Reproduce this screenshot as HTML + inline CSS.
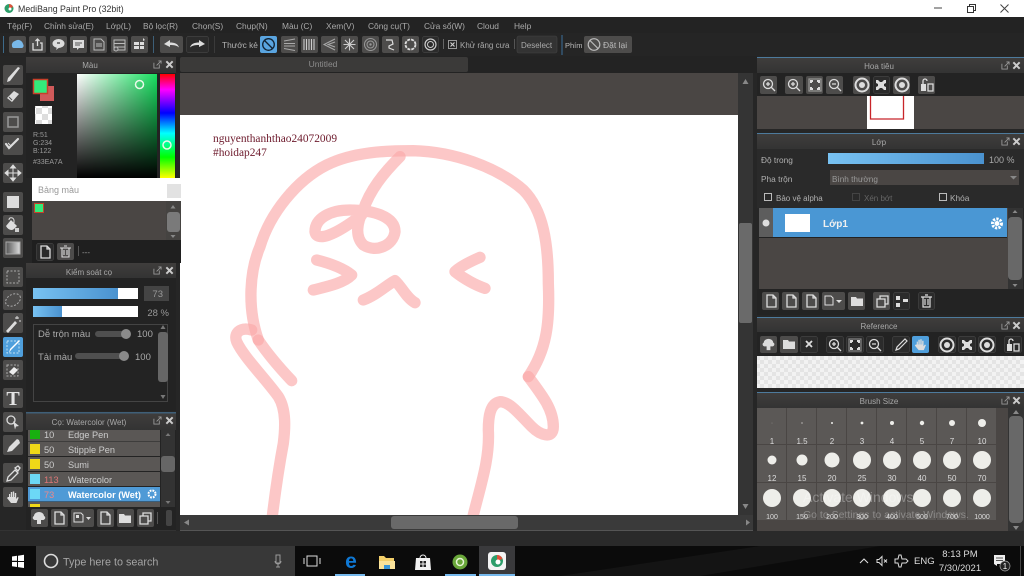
<!DOCTYPE html>
<html><head><meta charset="utf-8"><title>MediBang Paint Pro</title>
<style>
html,body{margin:0;padding:0;background:#262626;width:1024px;height:576px;overflow:hidden}
svg{display:block;position:absolute;left:0;top:0}
#root{filter:blur(.3px)}
text{font-family:"Liberation Sans","Noto Sans CJK SC",sans-serif;font-size:9px;fill:#aaa}
.m{font-size:8.4px;fill:#a9a9a9}
.h{font-size:8px;fill:#a8a8a8;text-anchor:middle}
.l{font-size:8.3px;fill:#b0b0b0}
.bn{fill:#4d4c4b}
.bd{fill:#2b2b2b;stroke:#444;stroke-width:.7}
.n{font-size:8px;fill:#ddd;text-anchor:middle}
.d{fill:#eeeeea}
.r{font-size:9.2px;fill:#ccc}
.s{fill:none;stroke:#ddd;stroke-width:1.3}
.f{fill:#ddd}
.p path{fill:none;stroke:rgba(251,168,168,.64);stroke-width:34;stroke-linecap:round;stroke-linejoin:round}
</style></head><body>
<svg id="root" width="1024" height="576" viewBox="0 0 1024 576" xmlns="http://www.w3.org/2000/svg">
<defs>
<linearGradient id="bl" x1="0" x2="1" y1="0" y2="0"><stop offset="0" stop-color="#78c2f2"/><stop offset="1" stop-color="#4a92cf"/></linearGradient>
<linearGradient id="sv" x1="0" x2="1" y1="0" y2="0"><stop offset="0" stop-color="#fff"/><stop offset="1" stop-color="#18e060"/></linearGradient>
<linearGradient id="sk" x1="0" x2="0" y1="0" y2="1"><stop offset="0" stop-color="#000" stop-opacity="0"/><stop offset="1" stop-color="#000"/></linearGradient>
<linearGradient id="hue" x1="0" x2="0" y1="0" y2="1"><stop offset="0" stop-color="#f00"/><stop offset=".15" stop-color="#f0f"/><stop offset=".375" stop-color="#00f"/><stop offset=".57" stop-color="#0ff"/><stop offset=".8" stop-color="#0f0"/><stop offset="1" stop-color="#ff0"/></linearGradient>
<linearGradient id="hd" x1="0" x2="0" y1="0" y2="1"><stop offset="0" stop-color="#3f3d3c"/><stop offset="1" stop-color="#333"/></linearGradient>
<linearGradient id="gr" x1="0" x2="1" y1="0" y2="0"><stop offset="0" stop-color="#555"/><stop offset="1" stop-color="#ddd"/></linearGradient>
<pattern id="ck" width="8" height="8" patternUnits="userSpaceOnUse"><rect width="8" height="8" fill="#f2f2f2"/><rect width="4" height="4" fill="#e4e4e4"/><rect x="4" y="4" width="4" height="4" fill="#e4e4e4"/></pattern>
<pattern id="ck2" width="12" height="12" patternUnits="userSpaceOnUse"><rect width="12" height="12" fill="#fff"/><rect width="6" height="6" fill="#ddd"/><rect x="6" y="6" width="6" height="6" fill="#ddd"/></pattern>
<symbol id="pg" viewBox="0 0 18 18"><path class="s" d="M5 3h6l3 3v9H5zM11 3v3h3"/></symbol>
<symbol id="fd" viewBox="0 0 18 18"><path class="f" d="M3 5h5l1 1.5h6V14H3z"/></symbol>
<symbol id="cp" viewBox="0 0 18 18"><path class="s" d="M4 7h8v8H4zM7 7V4h8v8h-3"/></symbol>
<symbol id="zi" viewBox="0 0 18 18"><circle class="s" cx="8" cy="8" r="4.5"/><path class="s" d="M11.5 11.5l3.5 3.5M6 8h4M8 6v4"/></symbol>
<symbol id="zo" viewBox="0 0 18 18"><circle class="s" cx="8" cy="8" r="4.5"/><path class="s" d="M11.5 11.5l3.5 3.5M6 8h4"/></symbol>
<symbol id="ft" viewBox="0 0 18 18"><path class="s" d="M3 3h12v12H3z" stroke-opacity=".5"/><path class="f" d="M4 4h3v2H6v1H4zM14 4v3h-2V6h-1V4zM4 14v-3h2v1h1v2zM14 14h-3v-2h1v-1h2z"/></symbol>
<symbol id="rt" viewBox="0 0 18 18"><circle cx="9" cy="9" r="6.5" fill="none" stroke="#ddd" stroke-width="2"/><circle class="f" cx="9" cy="9" r="3"/></symbol>
<symbol id="fl" viewBox="0 0 18 18"><path class="f" d="M4 4h2l2 2h2l2-2h2v3l-2 1v2l2 1v3h-2l-2-2H8l-2 2H4v-3l2-1V8L4 7z"/></symbol>
<symbol id="lk" viewBox="0 0 18 18"><path class="f" d="M3 8h5v7H3z"/><path class="s" d="M10 8h5v7h-5zM5 8V5a2 2 0 0 1 4 0"/></symbol>
<symbol id="hd2" viewBox="0 0 18 18"><path class="f" d="M5 9V6h1.2v3h.6V4h1.4v5h.6V3.5h1.4V9h.6V5h1.400v6l1.500-2 1 .6L12.500 15H7L3 10l1-1z"/></symbol>
<symbol id="up" viewBox="0 0 18 18"><path class="f" d="M9 3c3 0 5 2 5 4 1.500.4 2 3-.5 4H11v4H7v-4H4.500C2 10 2.500 7.500 4 7c0-2 2-4 5-4z"/></symbol>
<symbol id="px" viewBox="0 0 10 10"><path d="M1 3v6h6V5M4 6l5-5M6 1h3v3" fill="none" stroke="#999" stroke-width="1"/></symbol>
<symbol id="cl" viewBox="0 0 10 10"><path d="M1.500 1.500l7 7M8.500 1.500l-7 7" stroke="#ccc" stroke-width="2.200"/></symbol>
</defs>

<!-- base -->
<rect width="1024" height="576" fill="#262626"/>
<!-- title bar -->
<rect width="1024" height="17" fill="#fff"/>
<circle cx="9" cy="8.500" r="4.500" fill="#2d9d6a"/><path d="M9 4a4.500 4.500 0 0 1 4 3l-4 2z" fill="#e0513a"/><circle cx="10" cy="9" r="1.500" fill="#fff"/>
<text x="18" y="12" style="font-size:8.800px;fill:#333">MediBang Paint Pro (32bit)</text>
<path d="M934 8h8" stroke="#444" stroke-width="1"/><path d="M967.500 6.500h6v6h-6zM969.500 6.500V4.500h6v6h-2" fill="none" stroke="#333" stroke-width="1"/><path d="M1000.500 4.500l8 8M1008.500 4.500l-8 8" stroke="#444" stroke-width="1"/>

<!-- menu -->
<rect y="17" width="1024" height="16" fill="#232323"/>
<text class="m" x="7" y="29">Tệp(F)</text><text class="m" x="44" y="29">Chỉnh sửa(E)</text><text class="m" x="106" y="29">Lớp(L)</text><text class="m" x="143" y="29">Bộ lọc(R)</text><text class="m" x="192" y="29">Chọn(S)</text><text class="m" x="236" y="29">Chụp(N)</text><text class="m" x="282" y="29">Màu (C)</text><text class="m" x="326" y="29">Xem(V)</text><text class="m" x="368" y="29">Công cụ(T)</text><text class="m" x="424" y="29">Cửa sổ(W)</text><text class="m" x="477" y="29">Cloud</text><text class="m" x="514" y="29">Help</text>

<!-- toolbar -->
<rect y="33" width="1024" height="23" fill="#252525"/>
<rect x="3" y="36" width="1" height="17" fill="#3d6a8a"/>
<g class="bn">
<rect x="9" y="36" width="17" height="17" rx="2"/><rect x="29" y="36" width="17" height="17" rx="2"/><rect x="50" y="36" width="17" height="17" rx="2"/><rect x="70" y="36" width="17" height="17" rx="2"/><rect x="90" y="36" width="17" height="17" rx="2"/><rect x="111" y="36" width="17" height="17" rx="2"/><rect x="131" y="36" width="17" height="17" rx="2"/>
<rect x="160" y="36" width="23" height="17" rx="2"/>
<rect x="281" y="36" width="17" height="17" rx="2"/><rect x="301" y="36" width="17" height="17" rx="2"/><rect x="321" y="36" width="17" height="17" rx="2"/><rect x="341" y="36" width="17" height="17" rx="2"/><rect x="362" y="36" width="17" height="17" rx="2"/><rect x="382" y="36" width="17" height="17" rx="2"/><rect x="402" y="36" width="17" height="17" rx="2"/>
<rect x="584" y="36" width="48" height="17" rx="2"/>
</g>
<rect class="bd" x="186.500" y="36.500" width="22" height="16" rx="2"/>
<rect class="bd" x="422.500" y="36.500" width="16" height="16" rx="2"/>
<rect x="517" y="36" width="40" height="17" rx="2" fill="#333" stroke="#444" stroke-width=".6"/>
<path d="M12 46a4 4 0 0 1 3-5 5 5 0 0 1 8 3 2.500 2.500 0 0 1-1 4H14a2 2 0 0 1-2-2z" fill="#79b8e8"/>
<path class="s" d="M33 43v7h9v-7h-2M37.500 46V39M35.500 41l2-2 2 2"/>
<ellipse class="f" cx="58.500" cy="43.500" rx="6" ry="4.500"/><path d="M57 47l-1 3 4-3z" fill="#ddd"/><path d="M57 43h3" stroke="#555" stroke-width="1.500"/>
<path class="f" d="M73 40h11v8h-5l-2 2v-2h-4z"/><path d="M75 43h7M75 45h5" stroke="#555"/>
<path d="M94 39h7l3 3v8H94z" fill="none" stroke="#bbb"/><path d="M96 44h6M96 46h6" stroke="#bbb"/>
<path d="M114 40h11v10h-11zM114 43.500h11M114 47h11" fill="none" stroke="#bbb"/><circle cx="116" cy="49" r="2" fill="#555" stroke="#bbb"/>
<path class="f" d="M134 42h5v3h-5zM140 42h4v3h-4zM134 46h5v3h-5zM140 46h4v3h-4z"/><path d="M143 38l2 2-2 1z" fill="#ddd"/>
<rect x="153" y="36" width="1" height="17" fill="#3d5f78"/>
<path class="f" d="M164 44l6-4v2.500c4 0 8 1 9 5-2-2-5-2.500-9-2.500V47z"/>
<path class="f" d="M205 44l-6-4v2.500c-4 0-8 1-9 5 2-2 5-2.500 9-2.500V47z"/>
<rect x="214" y="36" width="1" height="17" fill="#3a3a3a"/>
<text x="222" y="48" style="font-size:8.300px;fill:#b4b4b4">Thước kẻ</text>
<rect x="260" y="36" width="17" height="17" rx="2" fill="#5aa5e0"/><circle cx="268.500" cy="44.500" r="5.800" fill="none" stroke="#123" stroke-width="1.300"/><path d="M264.500 40.500l8 8" stroke="#123" stroke-width="1.300"/>
<path d="M284 41l11-2M284 43.500h11M284 46h11M284 48.500l11 2" stroke="#aaa" stroke-width="1.100"/>
<path d="M304 39v11M306.500 39v11M309 39v11M311.500 39v11M314 39v11" stroke="#ccc" stroke-width="1.100"/>
<path d="M335 39l-11 5.500 11 5.500M335 42l-7 2.500 7 2.500" fill="none" stroke="#aaa"/>
<path d="M349.500 38.500v12M343.500 44.500h12M345 40l9 9M354 40l-9 9" stroke="#ccc" stroke-width="1.100"/>
<circle cx="370.500" cy="44.500" r="6" fill="none" stroke="#999"/><circle cx="370.500" cy="44.500" r="3.500" fill="none" stroke="#999"/><circle cx="370.500" cy="44.500" r="1.200" fill="#999"/>
<path d="M386 40h6l1 4-4 2v2l5 2" fill="none" stroke="#ddd" stroke-width="1.200"/>
<circle cx="410.500" cy="44.500" r="5" fill="none" stroke="#ddd" stroke-width="1.800" stroke-dasharray="3 1"/>
<circle cx="430.500" cy="44.500" r="5.500" fill="none" stroke="#ccc" stroke-width="1.200"/><circle cx="430.500" cy="44.500" r="3" fill="none" stroke="#ccc"/>
<rect x="443" y="39" width="1" height="10" fill="#666"/>
<rect x="448.500" y="40.500" width="8" height="8" fill="none" stroke="#999"/><path d="M450.500 42.500l4 4M454.500 42.500l-4 4" stroke="#ccc" stroke-width="1.200"/>
<text x="460" y="48" style="font-size:8px;fill:#aaa">Khử răng cưa</text>
<rect x="514" y="39" width="1" height="10" fill="#555"/>
<text x="521" y="48" style="font-size:8px;fill:#aaa">Deselect</text>
<rect x="561.500" y="35" width="1" height="20" fill="#3a6f9a"/>
<text x="565" y="48" style="font-size:7.500px;fill:#bbb">Phím</text>
<circle cx="594" cy="44.500" r="5.800" fill="none" stroke="#bbb" stroke-width="1.200"/><path d="M590 40.500l8 8" stroke="#bbb" stroke-width="1.200"/>
<text x="603" y="48" style="font-size:8.500px;fill:#bbb">Đặt lại</text>

<!-- tab row -->
<rect x="176" y="56" width="581" height="17" fill="#232323"/>
<rect x="180" y="57" width="288" height="15" rx="2" fill="#3b3a39"/>
<text x="323" y="67" text-anchor="middle" style="font-size:8.500px;fill:#8c8c8c">Untitled</text>

<!-- canvas -->
<rect x="180" y="73" width="558" height="42" fill="#4a4644"/>
<rect x="180" y="115" width="558" height="400" fill="#fff"/>
<svg x="180" y="110" width="400" height="405" viewBox="0 0 1200 1215">
<g class="p">
<path d="M235 690C200 590 210 480 240 410 270 310 350 210 440 165 520 125 620 122 700 122 820 125 950 170 1030 240 1090 300 1105 400 1105 520 1110 640 1100 720 1045 800"/>
<path d="M660 140C610 190 570 240 550 300 530 340 525 380 550 405 590 430 640 405 645 365 645 320 580 300 510 300 450 300 405 325 405 365 410 395 460 380 545 315"/>
<path d="M410 450C450 460 490 475 515 495 490 520 440 530 400 540"/>
<path d="M900 442C870 455 840 470 825 485 850 505 885 525 915 535"/>
<path d="M550 570C590 555 620 525 645 512 665 530 680 565 705 578"/>
<path d="M235 690C265 735 300 775 335 812"/>
<path d="M215 660C180 650 160 670 170 695 190 740 260 810 295 860 320 900 315 960 310 1000 295 1080 285 1150 275 1235"/>
<path d="M1045 800C1090 860 1120 900 1120 950 1120 990 1080 975 1055 950 1020 915 990 875 960 875 930 880 925 920 925 960 930 1050 900 1130 875 1235"/>
</g>
</svg>
<text x="213" y="142" style="font-family:'Liberation Serif',serif;font-size:11.400px;fill:#6d1a2c">nguyenthanhthao24072009</text>
<text x="213" y="156" style="font-family:'Liberation Serif',serif;font-size:11.400px;fill:#6d1a2c">#hoidap247</text>

<!-- center scrollbars -->
<rect x="738" y="73" width="15" height="442" fill="#343434"/>
<rect x="739" y="223" width="13" height="100" rx="2" fill="#6a6a6a"/>
<path d="M745.500 79l-3 5h6zM745.500 509l-3-5h6z" fill="#888"/>
<rect x="180" y="515" width="573" height="15" fill="#3a3a3a"/>
<rect x="180" y="530" width="573" height="1" fill="#555"/>
<rect x="391" y="516" width="127" height="13" rx="3" fill="#696969"/>
<path d="M184 522.500l5-3v6zM750 522.500l-4-3v6z" fill="#888"/>

<!-- left tool strip -->
<rect x="0" y="56" width="26" height="474" fill="#262626"/>
<g class="bn">
<rect x="3" y="65" width="20" height="20" rx="2"/><rect x="3" y="88" width="20" height="20" rx="2"/><rect x="3" y="112" width="20" height="20" rx="2"/><rect x="3" y="135" width="20" height="20" rx="2"/><rect x="3" y="163" width="20" height="20" rx="2"/><rect x="3" y="192" width="20" height="20" rx="2"/><rect x="3" y="215" width="20" height="20" rx="2"/><rect x="3" y="238" width="20" height="20" rx="2"/><rect x="3" y="267" width="20" height="20" rx="2"/><rect x="3" y="290" width="20" height="20" rx="2"/><rect x="3" y="313" width="20" height="20" rx="2"/><rect x="3" y="360" width="20" height="20" rx="2"/><rect x="3" y="388" width="20" height="20" rx="2"/><rect x="3" y="412" width="20" height="20" rx="2"/><rect x="3" y="435" width="20" height="20" rx="2"/><rect x="3" y="463" width="20" height="20" rx="2"/><rect x="3" y="487" width="20" height="20" rx="2"/>
</g>
<rect x="3" y="337" width="20" height="20" rx="2" fill="#4f9fdc"/>
<path d="M7 82l3-1 10-13-2-1-10 11z" fill="#ddd"/>
<path d="M7 98l7-7 5 3-7 8z" fill="#ddd"/><path d="M9 97l3 3" stroke="#555"/>
<rect x="8" y="117" width="10" height="10" fill="none" stroke="#999" stroke-width="1.500"/>
<path d="M6 144l3 4 9-9" fill="none" stroke="#ddd" stroke-width="2.200" stroke-linecap="round"/><path d="M8 143l3 3" stroke="#ddd"/>
<path d="M13 165l2.500 3h-5zM13 181l2.500-3h-5zM5 173l3 2.500v-5zM21 173l-3 2.500v-5zM13 168v10M8 173h10" fill="#ddd" stroke="#ddd"/>
<rect x="7" y="196" width="12" height="12" fill="#ddd"/>
<path d="M6 226l5-6 6 6-3 3c-2 2-6 1-8-3z" fill="#ddd"/><path d="M9 220c0-3 4-3 5 0v3" fill="none" stroke="#ddd"/><path d="M15 228h4v4h-4z" fill="#ddd" opacity=".9"/>
<rect x="6" y="242" width="14" height="12" fill="url(#gr)" stroke="#aaa"/>
<rect x="7" y="271" width="12" height="12" fill="none" stroke="#aaa" stroke-dasharray="2 1.500"/>
<ellipse cx="13" cy="300" rx="8" ry="5.500" fill="none" stroke="#aaa" stroke-dasharray="2 1.500" transform="rotate(-30 13 300)"/>
<path d="M6 331l9-10 2 2-9 10z" fill="#ddd"/><path d="M17 316v3M15 318h4M20 320v2" stroke="#ddd"/>
<rect x="7" y="341" width="12" height="12" fill="none" stroke="#bfe0f5" stroke-dasharray="2 1.500"/><path d="M9 353l2-3 9-9-1-1-9 9z" fill="#fff"/>
<rect x="7" y="365" width="11" height="11" fill="none" stroke="#aaa" stroke-dasharray="2 1.500"/><path d="M9 372l5-5 4 3-5 5z" fill="#eee"/>
<text x="13" y="405" text-anchor="middle" style="font-family:'Liberation Serif',serif;font-size:20px;font-weight:bold;fill:#e4e4e4">T</text>
<circle cx="11" cy="420" r="4" fill="none" stroke="#ddd" stroke-width="1.300"/><path d="M13 421l6 5-3 .5-1 3z" fill="#ddd"/>
<path d="M7 452l2-5 8-8 2 1 1 3-8 8z" fill="#ddd"/>
<path d="M7 481l1-4 7-7 3 3-7 7zM15 468l3-2 2 2-2 3z" fill="none" stroke="#ddd" stroke-width="1.300"/>
<use href="#hd2" x="4" y="488" width="18" height="18"/>

<!-- colour panel -->
<rect x="26" y="57" width="150" height="16" fill="url(#hd)"/>
<rect x="26" y="73" width="150" height="105" fill="#232323"/>
<text class="h" x="90" y="68">Màu</text>
<use href="#px" x="153" y="60" width="9" height="9"/><use href="#cl" x="165" y="60" width="9" height="9"/>
<rect x="40" y="86" width="14" height="15" fill="#d05a5a"/>
<rect x="33.500" y="79.500" width="14" height="14" fill="#33ea7a" stroke="#c8402a" stroke-width="1.500"/>
<rect x="35" y="106" width="17" height="18" fill="url(#ck2)"/>
<text x="33" y="137" style="font-size:7px;fill:#999">R:51</text><text x="33" y="145" style="font-size:7px;fill:#999">G:234</text><text x="33" y="153" style="font-size:7px;fill:#999">B:122</text><text x="33" y="164" style="font-size:7px;fill:#999">#33EA7A</text>
<rect x="77" y="74" width="80" height="104" fill="url(#sv)"/><rect x="77" y="74" width="80" height="104" fill="url(#sk)"/>
<circle cx="139.500" cy="84.500" r="4" fill="none" stroke="#e8f8e8" stroke-width="1.500"/>
<rect x="160" y="74" width="15" height="104" fill="url(#hue)"/>
<circle cx="167" cy="145" r="4" fill="none" stroke="#e8f8e8" stroke-width="1.500"/>

<!-- palette -->
<rect x="32" y="178" width="149" height="23" fill="#fff"/>
<text x="38" y="193" style="font-size:9px;fill:#999">Bảng màu</text>
<rect x="167" y="184" width="14" height="14" fill="#e2e2e2"/>
<rect x="32" y="201" width="149" height="39" fill="#4a4644"/>
<rect x="34.500" y="203.500" width="9" height="9" fill="#33ea7a" stroke="#c8402a"/>
<rect x="166" y="201" width="15" height="39" fill="#454341"/>
<rect x="167" y="212" width="13" height="20" rx="3" fill="#7a7a7a"/>
<path d="M173 205l-2.500 3.500h5zM173 238l-2.500-3h5z" fill="#888"/>
<rect x="32" y="240" width="149" height="23" fill="#1f1f1f"/>
<rect class="bd" x="36.500" y="243.500" width="17" height="17" rx="2"/><use href="#pg" x="36" y="243" width="18" height="18"/>
<rect class="bn" x="57" y="243" width="17" height="17" rx="2"/>
<path d="M60 248h11M62 248v9h7v-9M64 246h3M64 250v5M67 250v5" fill="none" stroke="#ddd" stroke-width="1.100"/>
<rect x="78" y="246" width="1" height="10" fill="#555"/>
<text x="82" y="255" style="font-size:8px;fill:#999">---</text>

<!-- brush control -->
<rect x="26" y="263" width="150" height="15" fill="url(#hd)"/>
<rect x="26" y="278" width="150" height="133" fill="#232323"/>
<text class="h" x="89" y="275">Kiểm soát cọ</text>
<use href="#px" x="153" y="266" width="9" height="9"/><use href="#cl" x="165" y="266" width="9" height="9"/>
<rect x="33" y="288" width="105" height="11" fill="#fff"/><rect x="33" y="288" width="85" height="11" fill="url(#bl)"/>
<rect x="144" y="286" width="25" height="15" fill="#444"/><text x="163" y="297" text-anchor="end" style="font-size:9.500px;fill:#999">73</text>
<rect x="33" y="306" width="105" height="11" fill="#fff"/><rect x="33" y="306" width="29" height="11" fill="url(#bl)"/>
<text x="169" y="316" text-anchor="end" style="font-size:9.500px;fill:#999">28 %</text>
<rect x="33.500" y="324.500" width="134" height="77" fill="none" stroke="#444"/>
<text x="38" y="337" style="font-size:9.500px;fill:#aaa">Dễ trộn màu</text>
<rect x="95" y="331" width="35" height="6" rx="3" fill="#4f4f4f"/><circle cx="126" cy="334" r="5" fill="#8a8a8a"/>
<text x="137" y="337" style="font-size:9.500px;fill:#aaa">100</text>
<text x="38" y="360" style="font-size:9.500px;fill:#aaa">Tải màu</text>
<rect x="75" y="353" width="50" height="6" rx="3" fill="#4f4f4f"/><circle cx="124" cy="356" r="5" fill="#8a8a8a"/>
<text x="135" y="360" style="font-size:9.500px;fill:#aaa">100</text>
<rect x="158" y="332" width="10" height="50" rx="3" fill="#666"/>
<path d="M163 325l-2.500 4h5zM163 399l-2.500-4h5z" fill="#777"/>

<!-- brush list -->
<rect x="26" y="412" width="150" height="1.500" fill="#3f5f78"/>
<rect x="26" y="413.500" width="150" height="16.500" fill="url(#hd)"/>
<rect x="26" y="430" width="150" height="100" fill="#232323"/>
<text class="h" x="89" y="425">Cọ: Watercolor (Wet)</text>
<use href="#px" x="153" y="416" width="9" height="9"/><use href="#cl" x="165" y="416" width="9" height="9"/>
<g fill="#5a5755">
<rect x="28" y="430" width="132" height="11.500"/><rect x="28" y="442" width="132" height="14"/><rect x="28" y="457" width="132" height="14"/><rect x="28" y="472" width="132" height="14"/><rect x="28" y="502" width="132" height="5"/>
</g>
<rect x="28" y="487" width="132" height="14.500" fill="#4f9ad6"/>
<rect x="30" y="430" width="10" height="9" fill="#18b010"/><rect x="30" y="444" width="10" height="10" fill="#f0d818"/><rect x="30" y="459" width="10" height="10" fill="#f0d818"/><rect x="30" y="474" width="10" height="10" fill="#6cd8f6"/><rect x="30" y="489" width="10" height="10" fill="#6cd8f6"/><rect x="30" y="504" width="10" height="3" fill="#f0d818"/>
<text x="44" y="438" class="r">10</text><text x="68" y="438" class="r">Edge Pen</text>
<text x="44" y="453" class="r">50</text><text x="68" y="453" class="r">Stipple Pen</text>
<text x="44" y="468" class="r">50</text><text x="68" y="468" class="r">Sumi</text>
<text x="44" y="483" class="r" style="fill:#d77">113</text><text x="68" y="483" class="r">Watercolor</text>
<text x="44" y="498" class="r" style="fill:#e88">73</text><text x="68" y="498" class="r" style="fill:#fff;font-weight:bold">Watercolor (Wet)</text>
<circle cx="152" cy="494" r="3.500" fill="none" stroke="#fff" stroke-width="2" stroke-dasharray="1.800 1"/>
<rect x="161" y="430" width="14" height="77" fill="#333"/>
<rect x="161" y="456" width="14" height="16" rx="3" fill="#666"/>
<path d="M168 433l-2.500 3h5zM168 504l-2.500-3h5z" fill="#777"/>
<g class="bn"><rect x="31" y="509" width="17" height="18" rx="2"/><rect x="51" y="509" width="17" height="18" rx="2"/><rect x="71" y="509" width="23" height="18" rx="2"/><rect x="97" y="509" width="17" height="18" rx="2"/><rect x="117" y="509" width="17" height="18" rx="2"/><rect x="137" y="509" width="17" height="18" rx="2"/></g>
<use href="#up" x="30" y="509" width="18" height="18"/><use href="#pg" x="50" y="509" width="18" height="18"/>
<path d="M74 513h7l2 2v7h-9z" fill="none" stroke="#ddd"/><rect x="76" y="515" width="3" height="3" fill="#ddd"/><path d="M86 517h5l-2.500 3z" fill="#ddd"/>
<use href="#pg" x="96" y="509" width="18" height="18"/><use href="#fd" x="116" y="509" width="18" height="18"/><use href="#cp" x="136" y="509" width="18" height="18"/>
<rect x="157" y="512" width="1" height="12" fill="#555"/>
<rect x="166" y="510" width="6" height="16" rx="2" fill="#444"/>

<!-- right: navigator -->
<rect x="757" y="57" width="267" height="1" fill="#4d7a9c"/>
<rect x="757" y="58" width="267" height="15" fill="url(#hd)"/>
<rect x="757" y="73" width="267" height="23" fill="#232323"/>
<text class="h" x="879" y="69">Hoa tiêu</text>
<use href="#px" x="1001" y="61" width="9" height="9"/><use href="#cl" x="1012" y="61" width="9" height="9"/>
<g class="bn"><rect x="760" y="76" width="17" height="18" rx="2"/><rect x="785" y="76" width="18" height="18" rx="2"/><rect x="806" y="76" width="17" height="18" rx="2"/><rect x="826" y="76" width="17" height="18" rx="2"/><rect x="853" y="76" width="17" height="18" rx="2"/><rect x="893" y="76" width="17" height="18" rx="2"/><rect x="918" y="76" width="17" height="18" rx="2"/></g>
<rect class="bd" x="873.500" y="76.500" width="16" height="17" rx="2"/>
<use href="#zi" x="760" y="76" width="18" height="18"/><use href="#zi" x="785" y="76" width="18" height="18"/><use href="#ft" x="806" y="76" width="18" height="18"/><use href="#zo" x="826" y="76" width="18" height="18"/><use href="#rt" x="853" y="76" width="18" height="18"/><use href="#fl" x="872" y="76" width="18" height="18"/><use href="#rt" x="893" y="76" width="18" height="18"/><use href="#lk" x="918" y="76" width="18" height="18"/>
<rect x="757" y="96" width="267" height="33" fill="#4a4644"/>
<rect x="867" y="96" width="47" height="33" fill="#fff"/>
<path d="M870.500 96v23h33V96" fill="none" stroke="#c8252a" stroke-width="1.300"/>
<rect x="757" y="129" width="267" height="4" fill="#262626"/>

<!-- layer -->
<rect x="757" y="133" width="267" height="1" fill="#4d7a9c"/>
<rect x="757" y="134" width="267" height="15" fill="url(#hd)"/>
<rect x="757" y="149" width="267" height="59" fill="#2a2a2a"/>
<text class="h" x="879" y="145">Lớp</text>
<use href="#px" x="1001" y="137" width="9" height="9"/><use href="#cl" x="1012" y="137" width="9" height="9"/>
<text class="l" x="761" y="163">Độ trong</text>
<rect x="828" y="153" width="156" height="11" fill="url(#bl)"/>
<text x="989" y="163" style="font-size:9px;fill:#aaa">100 %</text>
<text class="l" x="761" y="182">Pha trộn</text>
<rect x="830" y="170" width="189" height="15" fill="#4a4644"/>
<text x="832" y="182" style="font-size:8.200px;fill:#999">Bình thường</text>
<path d="M1010 176h7l-3.500 3.500z" fill="#888"/>
<rect x="764.500" y="193.500" width="7" height="7" fill="none" stroke="#bbb"/>
<text x="776" y="201" style="font-size:8px;fill:#b0b0b0">Bảo vệ alpha</text>
<rect x="852.500" y="193.500" width="7" height="7" fill="none" stroke="#444"/>
<text x="864" y="201" style="font-size:8px;fill:#666">Xén bớt</text>
<rect x="939.500" y="193.500" width="7" height="7" fill="none" stroke="#bbb"/>
<text class="l" x="950" y="201">Khóa</text>
<rect x="759" y="208" width="249" height="81" fill="#4a4644"/>
<rect x="759" y="208" width="14" height="29" fill="#5d5d5d"/>
<circle cx="766" cy="223" r="3.500" fill="#ddd"/>
<rect x="773" y="208" width="234" height="29" fill="#4a97d4"/>
<rect x="759" y="237" width="248" height="1" fill="#222"/>
<rect x="785" y="214" width="25" height="18" fill="#fff"/>
<text x="823" y="227" style="font-size:10px;font-weight:bold;fill:#f0f0f0">Lớp1</text>
<circle cx="997" cy="223.500" r="4.500" fill="none" stroke="#fff" stroke-width="3" stroke-dasharray="2.200 1.200"/><circle cx="997" cy="223.500" r="2.500" fill="#fff"/>
<rect x="1008" y="208" width="15" height="81" fill="#333"/>
<rect x="1008" y="217" width="14" height="63" rx="4" fill="#686868"/>
<path d="M1015 210l-2.500 3h5zM1015 287l-2.500-3h5z" fill="#888"/>
<rect x="757" y="289" width="267" height="26" fill="#232323"/>
<g class="bn"><rect x="762" y="292" width="17" height="18" rx="2"/><rect x="782" y="292" width="17" height="18" rx="2"/><rect x="802" y="292" width="17" height="18" rx="2"/><rect x="822" y="292" width="23" height="18" rx="2"/><rect x="848" y="292" width="17" height="18" rx="2"/><rect x="873" y="292" width="17" height="18" rx="2"/></g>
<rect class="bd" x="893.500" y="292.500" width="16" height="17" rx="2"/><rect class="bd" x="918.500" y="292.500" width="16" height="17" rx="2"/>
<use href="#pg" x="762" y="292" width="18" height="18"/><use href="#pg" x="782" y="292" width="18" height="18"/><use href="#pg" x="802" y="292" width="18" height="18"/>
<path d="M825 296h6l2 2v7h-8z" fill="none" stroke="#ddd"/><path d="M836 300h6l-3 3z" fill="#ddd"/>
<use href="#fd" x="848" y="292" width="18" height="18"/><use href="#cp" x="873" y="292" width="18" height="18"/>
<path class="f" d="M896 296h4v4h-4zM896 303h4v4h-4zM903 299h5v3h-5z"/>
<path d="M921 297h11M923 297v10h7v-10M925 295h3M925 299v6M928 299v6" fill="none" stroke="#ddd" stroke-width="1.200"/>

<!-- reference -->
<rect x="757" y="317" width="267" height="1" fill="#4d7a9c"/>
<rect x="757" y="318" width="267" height="14" fill="url(#hd)"/>
<rect x="757" y="332" width="267" height="24" fill="#232323"/>
<text class="h" x="879" y="329">Reference</text>
<use href="#px" x="1001" y="321" width="9" height="9"/><use href="#cl" x="1012" y="321" width="9" height="9"/>
<g class="bn"><rect x="760" y="336" width="17" height="17" rx="2"/><rect x="780" y="336" width="18" height="17" rx="2"/></g>
<g class="bd"><rect x="800.500" y="336.500" width="17" height="16" rx="2"/><rect x="826.500" y="336.500" width="17" height="16" rx="2"/><rect x="846.500" y="336.500" width="17" height="16" rx="2"/><rect x="866.500" y="336.500" width="17" height="16" rx="2"/><rect x="892.500" y="336.500" width="17" height="16" rx="2"/><rect x="938.500" y="336.500" width="17" height="16" rx="2"/><rect x="958.500" y="336.500" width="17" height="16" rx="2"/><rect x="978.500" y="336.500" width="17" height="16" rx="2"/><rect x="1004.500" y="336.500" width="17" height="16" rx="2"/></g>
<rect x="912" y="336" width="17" height="17" rx="2" fill="#4f9fdc"/>
<use href="#up" x="760" y="336" width="17" height="17"/><use href="#fd" x="780" y="335" width="18" height="18"/>
<path d="M806 341l6 6M812 341l-6 6" stroke="#ddd" stroke-width="1.800"/>
<use href="#zi" x="826" y="336" width="18" height="18"/><use href="#ft" x="846" y="336" width="18" height="18"/><use href="#zo" x="866" y="336" width="18" height="18"/>
<path d="M896 350l1-3 8-8 2 2-8 8z" fill="none" stroke="#ddd" stroke-width="1.200"/>
<use href="#hd2" x="912" y="336" width="17" height="17"/>
<use href="#rt" x="938" y="336" width="18" height="18"/><use href="#fl" x="958" y="336" width="18" height="18"/><use href="#rt" x="978" y="336" width="18" height="18"/><use href="#lk" x="1004" y="336" width="18" height="18"/>
<rect x="757" y="356" width="267" height="32" fill="url(#ck)"/>

<!-- brush size -->
<rect x="757" y="392" width="267" height="1" fill="#4d7a9c"/>
<rect x="757" y="393" width="267" height="15" fill="url(#hd)"/>
<text class="h" x="879" y="404">Brush Size</text>
<use href="#px" x="1001" y="396" width="9" height="9"/><use href="#cl" x="1012" y="396" width="9" height="9"/>
<rect x="757" y="408" width="251" height="123" fill="#4a4644"/>
<g fill="#5b5856">
<rect x="757" y="408" width="29" height="36"/><rect x="787" y="408" width="29" height="36"/><rect x="817" y="408" width="29" height="36"/><rect x="847" y="408" width="29" height="36"/><rect x="877" y="408" width="29" height="36"/><rect x="907" y="408" width="29" height="36"/><rect x="937" y="408" width="29" height="36"/><rect x="967" y="408" width="29" height="36"/>
<rect x="757" y="445" width="29" height="37"/><rect x="787" y="445" width="29" height="37"/><rect x="817" y="445" width="29" height="37"/><rect x="847" y="445" width="29" height="37"/><rect x="877" y="445" width="29" height="37"/><rect x="907" y="445" width="29" height="37"/><rect x="937" y="445" width="29" height="37"/><rect x="967" y="445" width="29" height="37"/>
<rect x="757" y="483" width="29" height="37"/><rect x="787" y="483" width="29" height="37"/><rect x="817" y="483" width="29" height="37"/><rect x="847" y="483" width="29" height="37"/><rect x="877" y="483" width="29" height="37"/><rect x="907" y="483" width="29" height="37"/><rect x="937" y="483" width="29" height="37"/><rect x="967" y="483" width="29" height="37"/>
</g>
<g class="d">
<circle cx="772" cy="423" r=".3"/><circle cx="802" cy="423" r=".6"/><circle cx="832" cy="423" r="1"/><circle cx="862" cy="423" r="1.400"/><circle cx="892" cy="423" r="2"/><circle cx="922" cy="423" r="2.200"/><circle cx="952" cy="423" r="3"/><circle cx="982" cy="423" r="4"/>
<circle cx="772" cy="460" r="4.500"/><circle cx="802" cy="460" r="5.500"/><circle cx="832" cy="460" r="7.500"/><circle cx="862" cy="460" r="9"/><circle cx="892" cy="460" r="9"/><circle cx="922" cy="460" r="9"/><circle cx="952" cy="460" r="9"/><circle cx="982" cy="460" r="9"/>
<circle cx="772" cy="498" r="9"/><circle cx="802" cy="498" r="9"/><circle cx="832" cy="498" r="9"/><circle cx="862" cy="498" r="9"/><circle cx="892" cy="498" r="9"/><circle cx="922" cy="498" r="9"/><circle cx="952" cy="498" r="9"/><circle cx="982" cy="498" r="9"/>
</g>
<text class="n" x="772" y="444">1</text><text class="n" x="802" y="444">1.5</text><text class="n" x="832" y="444">2</text><text class="n" x="862" y="444">3</text><text class="n" x="892" y="444">4</text><text class="n" x="922" y="444">5</text><text class="n" x="952" y="444">7</text><text class="n" x="982" y="444">10</text>
<text class="n" x="772" y="481">12</text><text class="n" x="802" y="481">15</text><text class="n" x="832" y="481">20</text><text class="n" x="862" y="481">25</text><text class="n" x="892" y="481">30</text><text class="n" x="922" y="481">40</text><text class="n" x="952" y="481">50</text><text class="n" x="982" y="481">70</text>
<text class="n" x="772" y="519" style="font-size:7px">100</text><text class="n" x="802" y="519" style="font-size:7px">150</text><text class="n" x="832" y="519" style="font-size:7px">200</text><text class="n" x="862" y="519" style="font-size:7px">300</text><text class="n" x="892" y="519" style="font-size:7px">400</text><text class="n" x="922" y="519" style="font-size:7px">500</text><text class="n" x="952" y="519" style="font-size:7px">700</text><text class="n" x="982" y="519" style="font-size:7px">1000</text>
<rect x="1008" y="408" width="16" height="123" fill="#333"/>
<rect x="1009" y="416" width="14" height="107" rx="4" fill="#686868"/>
<path d="M1016 410l-3 4h6zM1016 530l-3-4h6z" fill="#888"/>
<text x="803" y="502" style="font-size:14px;fill:#fff;fill-opacity:.3">Activate Windows</text>
<text x="803" y="518" style="font-size:10.500px;fill:#fff;fill-opacity:.3">Go to Settings to activate Windows.</text>

<!-- bottom status -->
<rect y="531" width="1024" height="15" fill="#2a2a2a"/>
<rect y="530" width="176" height="1" fill="#333"/>

<!-- taskbar -->
<rect y="546" width="1024" height="30" fill="#0b0b0b"/>
<path d="M560 576L760 546h120L700 576z" fill="#141414"/>
<path d="M12 556.500l5-.7v5h-5zM18 555.700l6-.9v6.200h-6zM12 562h5v5l-5-.7zM18 562h6v6l-6-.9z" fill="#fff"/>
<rect x="36" y="546" width="259" height="30" fill="#383838"/>
<circle cx="51" cy="561" r="6.500" fill="none" stroke="#ddd" stroke-width="1.600"/>
<text x="63" y="565.500" style="font-size:10.800px;fill:#a5a5a5">Type here to search</text>
<path d="M276 555h4v8h-4zM275 561a3 3 0 0 0 6 0M278 564v3M276 567h4" fill="none" stroke="#999"/>
<path d="M307 556h10v10h-10zM304 558v6M320 558v6" fill="none" stroke="#ddd"/>
<rect x="335" y="574" width="30" height="2" fill="#76b9ed"/>
<text x="351" y="568" text-anchor="middle" style="font-size:21px;font-weight:bold;fill:#0f78d4">e</text>
<path d="M379 556h5l2 2h8v11h-15z" fill="#f3cf6a"/><rect x="379" y="561" width="16" height="8" fill="#fbe39a"/><rect x="384" y="565" width="6" height="4" fill="#3a96d8"/>
<path d="M416 558h14l1 12h-16z" fill="#f2f2f2"/><path d="M420 558a3 3 0 0 1 6 0" fill="none" stroke="#f2f2f2"/><path d="M420 561h2.500v2.500H420zM423.500 561H426v2.500h-2.500zM420 564.500h2.500V567H420zM423.500 564.500H426V567h-2.500z" fill="#222"/>
<rect x="445" y="574" width="31" height="2" fill="#76b9ed"/>
<circle cx="460" cy="562" r="7.500" fill="#6aa83a"/><circle cx="460" cy="562" r="3.500" fill="none" stroke="#e8f5d8" stroke-width="1.500"/>
<rect x="479" y="546" width="36" height="30" fill="#3a3a3c"/>
<rect x="479" y="574" width="36" height="2" fill="#76b9ed"/>
<rect x="488" y="552" width="18" height="18" rx="3" fill="#f4f4f4"/><circle cx="497" cy="561" r="6" fill="#2d9d6a"/><path d="M497 555a6 6 0 0 1 5.500 4l-5.500 2z" fill="#e0513a"/><circle cx="498" cy="562" r="2.500" fill="#fff"/>
<path d="M860 563l4-4 4 4" fill="none" stroke="#ddd" stroke-width="1.100"/>
<path d="M877 559.500h2l3-3v9l-3-3h-2zM884 559.500l3 3M887 559.500l-3 3" fill="none" stroke="#ddd"/>
<path d="M895 559h3l1-4h2l1 4h4l2 2-2 2h-4l-1 4h-2l-1-4h-3z" fill="none" stroke="#ddd"/>
<text x="914" y="564" style="font-size:9.500px;fill:#ddd">ENG</text>
<text x="960" y="557" text-anchor="middle" style="font-size:9.500px;fill:#ddd">8:13 PM</text>
<text x="960" y="571" text-anchor="middle" style="font-size:9.500px;fill:#ddd">7/30/2021</text>
<path d="M994 555h11v9h-8v2l-3-2z" fill="#eee"/><path d="M996 558h7M996 560.500h7" stroke="#555"/>
<circle cx="1005" cy="566" r="5" fill="#222" stroke="#aaa" stroke-width=".7"/><text x="1005" y="569" text-anchor="middle" style="font-size:8px;fill:#fff">1</text>
<rect x="1020" y="546" width="1" height="30" fill="#444"/>
</svg>
</body></html>
